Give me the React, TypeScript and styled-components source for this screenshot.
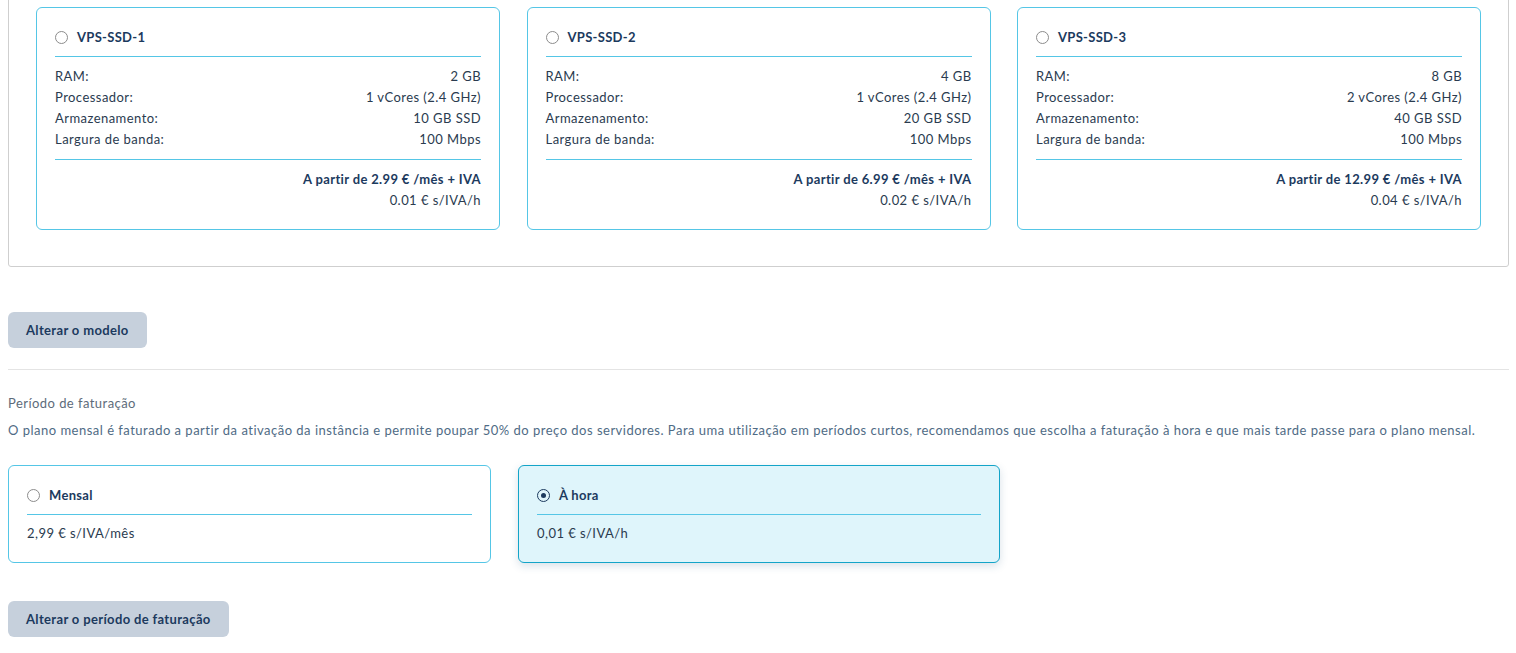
import * as React from "react";
import styled, { createGlobalStyle } from "styled-components";

const navy = "#1c3a5e";
const text = "#2a3b4f";
const cyan = "#55c6e6";

const GlobalStyle = createGlobalStyle`
  html, body {
    margin: 0;
    padding: 0;
    background: #fff;
    overflow: hidden;
  }
  body {
    font-family: Lato, "Noto Sans", sans-serif;
    font-size: 13px;
    letter-spacing: 0.45px;
    color: ${text};
  }
`;

type Plan = {
  name: string;
  ram: string;
  cpu: string;
  disk: string;
  bandwidth: string;
  monthly: string;
  hourly: string;
};

const plans: Plan[] = [
  { name: "VPS-SSD-1", ram: "2 GB", cpu: "1 vCores (2.4 GHz)", disk: "10 GB SSD", bandwidth: "100 Mbps", monthly: "2.99", hourly: "0.01" },
  { name: "VPS-SSD-2", ram: "4 GB", cpu: "1 vCores (2.4 GHz)", disk: "20 GB SSD", bandwidth: "100 Mbps", monthly: "6.99", hourly: "0.02" },
  { name: "VPS-SSD-3", ram: "8 GB", cpu: "2 vCores (2.4 GHz)", disk: "40 GB SSD", bandwidth: "100 Mbps", monthly: "12.99", hourly: "0.04" }
];

const Page = styled.div`
  padding: 0 7px 0 8px;
`;

const Panel = styled.div`
  margin-top: -22px;
  border: 1px solid #cfcfcf;
  border-radius: 3px;
  padding: 28px 27px 36px;
  display: grid;
  grid-template-columns: repeat(3, 464px);
  justify-content: space-between;
`;

const Card = styled.div<{ $selected?: boolean }>`
  border: 1px solid ${(p) => (p.$selected ? "#13a4c8" : cyan)};
  background: ${(p) => (p.$selected ? "#dff5fb" : "#fff")};
  box-shadow: ${(p) => (p.$selected ? "0 3px 8px rgba(40, 90, 130, 0.18)" : "none")};
  border-radius: 6px;
  padding: 18px;
`;

const CardHeader = styled.div`
  display: flex;
  align-items: center;
  gap: 9px;
  height: 22px;
  padding-bottom: 8px;
  border-bottom: 1px solid ${cyan};
`;

const Radio = styled.span<{ $checked?: boolean }>`
  width: 13px;
  height: 13px;
  box-sizing: border-box;
  border-radius: 50%;
  border: 1px solid ${(p) => (p.$checked ? navy : "#8c8c8c")};
  display: inline-flex;
  align-items: center;
  justify-content: center;
  background: ${(p) => (p.$checked ? "transparent" : "#fff")};
  &::after {
    content: "";
    width: 5px;
    height: 5px;
    border-radius: 50%;
    background: ${navy};
    display: ${(p) => (p.$checked ? "block" : "none")};
  }
`;

const Title = styled.span`
  font-weight: 700;
  font-size: 13px;
  letter-spacing: 0.3px;
  color: ${navy};
`;

const Specs = styled.div`
  padding: 9px 0;
  border-bottom: 1px solid ${cyan};
`;

const SpecRow = styled.div`
  display: flex;
  justify-content: space-between;
  line-height: 21px;
`;

const Pricing = styled.div`
  padding-top: 9px;
  text-align: right;
  line-height: 21px;
`;

const PriceMain = styled.div`
  font-weight: 700;
  letter-spacing: 0.35px;
  color: ${navy};
`;

const Button = styled.button`
  display: block;
  height: 36px;
  padding: 0 18px;
  border: none;
  border-radius: 6px;
  background: #c6d0dc;
  color: ${navy};
  font-family: inherit;
  font-size: 13px;
  font-weight: 700;
  letter-spacing: 0.35px;
  cursor: pointer;
`;

const ModelButton = styled(Button)`
  margin-top: 45px;
`;

const Rule = styled.hr`
  margin: 21px 0 0;
  border: none;
  border-top: 1px solid #e4e4e4;
`;

const Label = styled.div`
  margin-top: 23px;
  line-height: 20px;
  color: #5d6b7a;
`;

const Description = styled.p`
  margin: 7px 0 0;
  line-height: 20px;
  letter-spacing: 0.49px;
  color: #4f6b85;
`;

const BillingGrid = styled.div`
  display: grid;
  grid-template-columns: 483px 482px;
  gap: 27px;
  margin-top: 25px;
`;

const PeriodPrice = styled.div`
  padding-top: 8px;
  line-height: 21px;
`;

const PeriodButton = styled(Button)`
  margin-top: 38px;
`;

function PlanCard({ plan }: { plan: Plan }) {
  return (
    <Card>
      <CardHeader>
        <Radio />
        <Title>{plan.name}</Title>
      </CardHeader>
      <Specs>
        <SpecRow><span>RAM:</span><span>{plan.ram}</span></SpecRow>
        <SpecRow><span>Processador:</span><span>{plan.cpu}</span></SpecRow>
        <SpecRow><span>Armazenamento:</span><span>{plan.disk}</span></SpecRow>
        <SpecRow><span>Largura de banda:</span><span>{plan.bandwidth}</span></SpecRow>
      </Specs>
      <Pricing>
        <PriceMain>A partir de {plan.monthly} € /mês + IVA</PriceMain>
        <div>{plan.hourly} € s/IVA/h</div>
      </Pricing>
    </Card>
  );
}

export default function App() {
  return (
    <>
      <GlobalStyle />
      <Page>
        <Panel>
          {plans.map((p) => (
            <PlanCard key={p.name} plan={p} />
          ))}
        </Panel>
        <ModelButton>Alterar o modelo</ModelButton>
        <Rule />
        <Label>Período de faturação</Label>
        <Description>
          O plano mensal é faturado a partir da ativação da instância e permite poupar 50% do preço dos servidores. Para uma utilização em períodos curtos, recomendamos que escolha a faturação à hora e que mais tarde passe para o plano mensal.
        </Description>
        <BillingGrid>
          <Card>
            <CardHeader>
              <Radio />
              <Title>Mensal</Title>
            </CardHeader>
            <PeriodPrice>2,99 € s/IVA/mês</PeriodPrice>
          </Card>
          <Card $selected>
            <CardHeader>
              <Radio $checked />
              <Title>À hora</Title>
            </CardHeader>
            <PeriodPrice>0,01 € s/IVA/h</PeriodPrice>
          </Card>
        </BillingGrid>
        <PeriodButton>Alterar o período de faturação</PeriodButton>
      </Page>
    </>
  );
}
